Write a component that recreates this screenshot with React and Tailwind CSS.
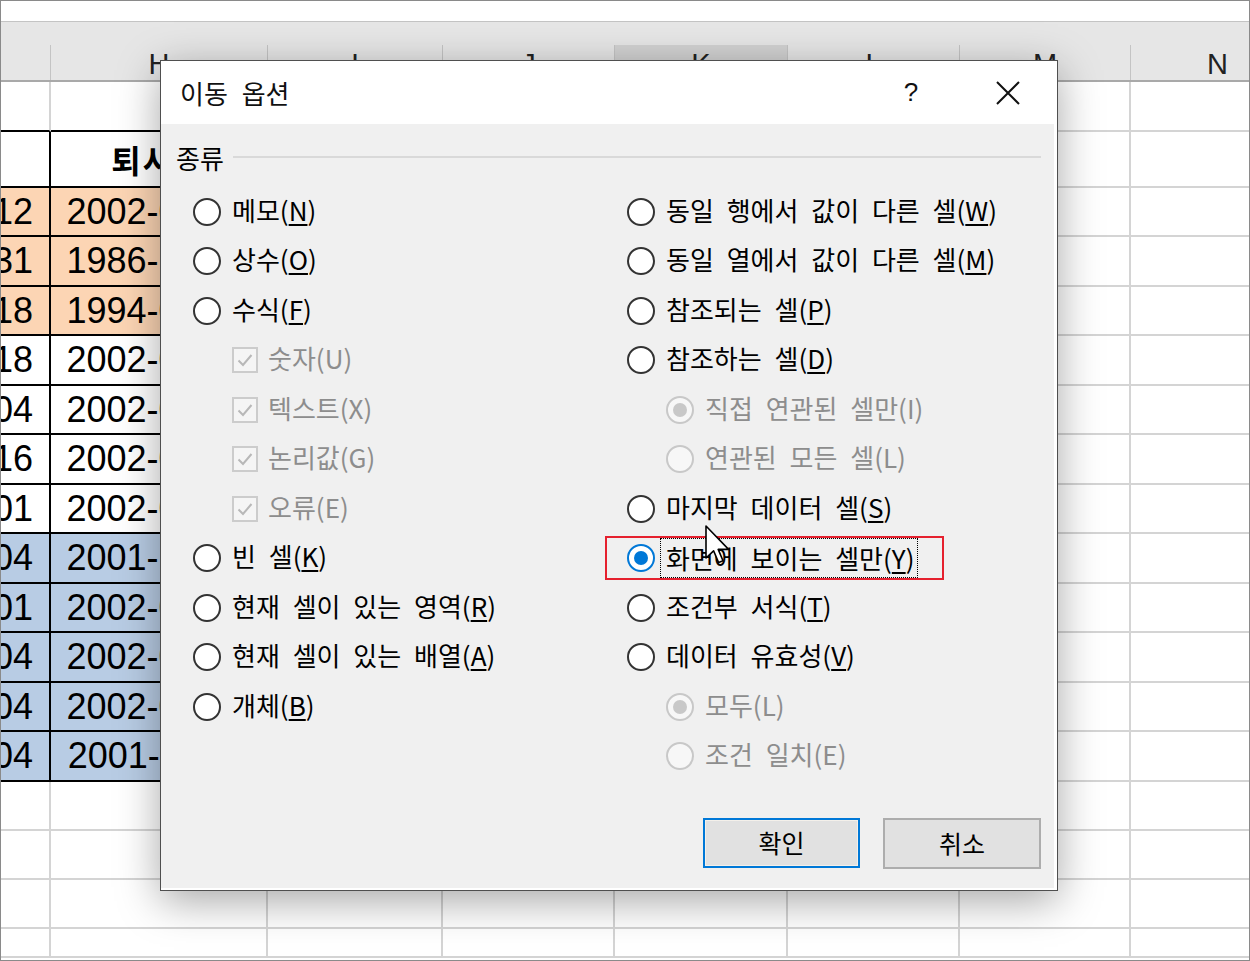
import React from 'react';
import clsx from 'clsx';

const ko = "font-['Noto_Sans_CJK_KR','Noto_Sans',sans-serif]";
const lat = "font-['Liberation_Sans','Noto_Sans_CJK_KR',sans-serif]";

const colW = ['w-[50px]', 'w-[217px]', 'w-[175px]', 'w-[172px]', 'w-[173px]', 'w-[172px]', 'w-[171px]', 'w-[174px]'];
const letters = ['', 'H', 'I', 'J', 'K', 'L', 'M', 'N'];
const rowH = [
  'h-[50px]', 'h-[56px]',
  'h-[49px]', 'h-[50px]', 'h-[49px]', 'h-[50px]', 'h-[49px]', 'h-[50px]',
  'h-[49px]', 'h-[50px]', 'h-[49px]', 'h-[50px]', 'h-[49px]', 'h-[50px]',
  'h-[49px]', 'h-[49px]', 'h-[49px]', 'h-[29px]',
];

const hire = ['1995-06-12', '1980-03-31', '1990-09-18', '1998-05-18', '1997-11-04', '1999-02-16', '2000-08-01', '1996-10-04', '1999-07-01', '1998-03-04', '2000-01-04', '1995-04-04'];
const leave = ['2002-05-31', '1986-12-31', '1994-07-15', '2002-03-31', '2002-06-30', '2002-01-31', '2002-08-31', '2001-12-31', '2002-04-30', '2002-02-28', '2002-09-30', '2001-11-30'];

function Cell({ r, c }) {
  const blackB = c <= 2 && r <= 13;
  const blackR = c <= 2 && r >= 1 && r <= 13;
  const orange = c <= 2 && r >= 2 && r <= 4;
  const blue = c <= 2 && r >= 9 && r <= 13;
  const d = r - 2;
  let content = null;
  if (r === 1 && c === 1) {
    content = <span className={clsx(ko, 'text-[32px] font-bold text-black tracking-[2px]')}>퇴사일</span>;
  } else if (d >= 0 && d < 12 && c === 0) {
    content = <span className={clsx(lat, 'text-[36px] text-black whitespace-nowrap')}>{hire[d]}</span>;
  } else if (d >= 0 && d < 12 && c === 1) {
    content = <span className={clsx(lat, 'text-[36px] text-black whitespace-nowrap')}>{leave[d]}</span>;
  }
  return (
    <div
      className={clsx(
        'shrink-0 box-border border-r-2 border-b-2 flex items-center overflow-hidden',
        colW[c],
        c === 0 ? 'justify-end pr-[16px]' : 'justify-center',
        blackB ? 'border-b-black' : 'border-b-[#d4d4d4]',
        blackR ? 'border-r-black' : 'border-r-[#d4d4d4]',
        orange ? 'bg-[#fcd5b4]' : blue ? 'bg-[#b8cce4]' : 'bg-white'
      )}
    >
      {content}
    </div>
  );
}

function Radio({ checked, disabled }) {
  return (
    <div
      className={clsx(
        'w-[28px] h-[28px] shrink-0 rounded-full border-2 flex items-center justify-center',
        disabled ? 'border-[#c8c8c8] bg-[#f7f7f7]' : checked ? 'border-[#0078d7] bg-white' : 'border-[#333333] bg-white'
      )}
    >
      {checked && (
        <div className={clsx('w-[14px] h-[14px] rounded-full', disabled ? 'bg-[#c8c8c8]' : 'bg-[#0078d7]')} />
      )}
    </div>
  );
}

function Check() {
  return (
    <div className="w-[26px] h-[26px] shrink-0 border-2 border-[#cccccc] bg-[#f5f5f5] flex items-center justify-center">
      <svg width="18" height="18" viewBox="0 0 18 18">
        <polyline points="2.5,9.5 7,14 15.5,4" fill="none" stroke="#b8b8b8" strokeWidth="2" />
      </svg>
    </div>
  );
}

function Label({ text, k, disabled }) {
  return (
    <span className={clsx(ko, 'text-[26px] whitespace-nowrap leading-none [word-spacing:7px]', disabled ? 'text-[#8d8d8d]' : 'text-black')}>
      {text}(
      {disabled ? k : <span className="underline underline-offset-[3px] decoration-[1.5px]">{k}</span>})
    </span>
  );
}

function Opt({ type = 'radio', checked, disabled, text, k, indent }) {
  return (
    <div className={clsx('h-[49.5px] flex items-center', indent && 'pl-[39px]')}>
      {type === 'check' ? <Check /> : <Radio checked={checked} disabled={disabled} />}
      <div className={type === 'check' ? 'ml-[10px]' : 'ml-[11px]'}>
        <Label text={text} k={k} disabled={disabled} />
      </div>
    </div>
  );
}

function Dialog() {
  return (
    <div className="absolute left-[159px] top-[59px] w-[898px] h-[831px] border border-[#4f4f4f] bg-white shadow-[0_10px_40px_rgba(0,0,0,0.35)] flex flex-col">
      <div className="h-[63px] shrink-0 flex items-center bg-white">
        <span className={clsx(ko, 'pl-[19px] flex-1 text-[26px] text-[#111] [word-spacing:8px]')}>이동 옵션</span>
        <span className={clsx(lat, 'w-[40px] text-center text-[26px] text-[#111] mr-[55px]')}>?</span>
        <div className="w-[44px] flex items-center justify-center mr-[27px]">
          <svg width="24" height="24" viewBox="0 0 24 24">
            <path d="M1 1 L23 23 M23 1 L1 23" stroke="#111" strokeWidth="2" fill="none" />
          </svg>
        </div>
      </div>
      <div className="flex-1 bg-[#f0f0f0] mr-[3px] mb-[2px] flex flex-col">
        <div className="pt-[18px] flex items-end">
          <div className="h-[30px] w-full flex items-center pl-[15px] pr-[13px]">
            <span className={clsx(ko, 'text-[26px] text-black')}>종류</span>
            <div className="flex-1 h-[2px] bg-[#d9d9d9] ml-[9px]" />
          </div>
        </div>
        <div className="mt-[15px] grid grid-cols-[434px_1fr] pl-[32px]">
          <div className="flex flex-col">
            <Opt text="메모" k="N" />
            <Opt text="상수" k="O" />
            <Opt text="수식" k="F" />
            <Opt type="check" indent text="숫자" k="U" disabled />
            <Opt type="check" indent text="텍스트" k="X" disabled />
            <Opt type="check" indent text="논리값" k="G" disabled />
            <Opt type="check" indent text="오류" k="E" disabled />
            <Opt text="빈 셀" k="K" />
            <Opt text="현재 셀이 있는 영역" k="R" />
            <Opt text="현재 셀이 있는 배열" k="A" />
            <Opt text="개체" k="B" />
          </div>
          <div className="flex flex-col">
            <Opt text="동일 행에서 값이 다른 셀" k="W" />
            <Opt text="동일 열에서 값이 다른 셀" k="M" />
            <Opt text="참조되는 셀" k="P" />
            <Opt text="참조하는 셀" k="D" />
            <Opt indent checked disabled text="직접 연관된 셀만" k="I" />
            <Opt indent disabled text="연관된 모든 셀" k="L" />
            <Opt text="마지막 데이터 셀" k="S" />
            <div className="h-[49.5px] flex items-center">
              <div className="-ml-[22px] w-[339px] h-[44px] border-2 border-[#e5202e] pl-[20px] flex items-center">
                <Radio checked />
                <div className="ml-[5px] h-[40px] border border-dotted border-black pl-[5px] pr-[3px] flex items-center">
                  <Label text="화면에 보이는 셀만" k="Y" />
                </div>
              </div>
            </div>
            <Opt text="조건부 서식" k="T" />
            <Opt text="데이터 유효성" k="V" />
            <Opt indent checked disabled text="모두" k="L" />
            <Opt indent disabled text="조건 일치" k="E" />
          </div>
        </div>
        <div className="mt-auto mb-[19px] pr-[13px] flex justify-end gap-[23px]">
          <button className={clsx(ko, 'w-[157px] h-[50px] border-2 border-[#0078d7] bg-[#e1e1e1] shadow-[inset_0_0_0_1px_#f4f0ea] text-[25px] text-black')}>
            확인
          </button>
          <button className={clsx(ko, 'w-[158px] h-[51px] border-2 border-[#adadad] bg-[#e1e1e1] text-[25px] text-black')}>
            취소
          </button>
        </div>
      </div>
    </div>
  );
}

export default function App() {
  return (
    <div className="relative w-[1250px] h-[961px] overflow-hidden bg-white border border-[#8a8a8a] box-border">
      <div className="h-[21px] bg-white border-b border-[#c4c4c4]" />
      <div className="h-[60px] bg-[#e6e6e6] border-b-2 border-[#a9a9a9] flex flex-col">
        <div className="h-[23px] shrink-0" />
        <div className="flex-1 flex">
          {letters.map((l, i) => (
            <div
              key={i}
              className={clsx(
                'shrink-0 border-r border-[#c4c4c4] flex items-end justify-center leading-none pb-[1px]',
                colW[i],
                i === 4 ? 'bg-[#d2d2d2]' : 'bg-[#e6e6e6]',
                lat,
                'text-[29px] text-[#222]'
              )}
            >
              {l}
            </div>
          ))}
        </div>
      </div>
      {rowH.map((h, r) => (
        <div key={r} className={clsx('flex', h)}>
          {colW.map((_, c) => (
            <Cell key={c} r={r} c={c} />
          ))}
        </div>
      ))}

      <Dialog />

      <svg className="absolute left-[704px] top-[524px]" width="26" height="42" viewBox="0 0 13 21">
        <path d="M0.5 0.5 L0.5 16.5 L4.3 12.9 L6.8 18.8 L9 17.9 L6.6 12.2 L11.8 12.2 Z" fill="#fff" stroke="#000" strokeWidth="0.8" strokeLinejoin="round" />
      </svg>
    </div>
  );
}
